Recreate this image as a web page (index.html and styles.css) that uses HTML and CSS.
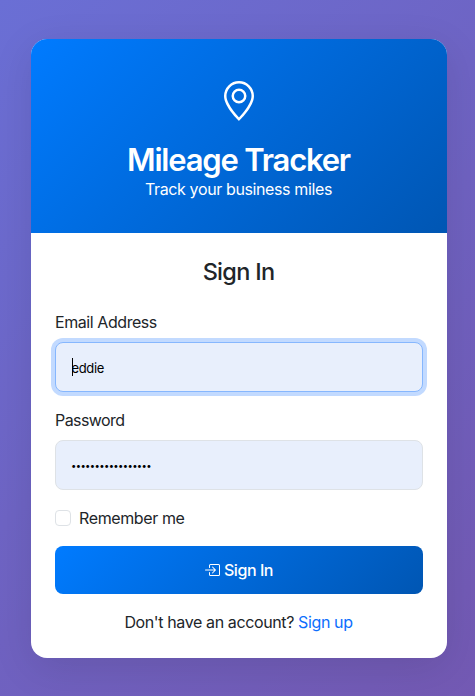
FILE: index.html
```html
<!DOCTYPE html>
<html lang="en">
<head>
<meta charset="utf-8">
<title>Mileage Tracker</title>
<link rel="stylesheet" href="styles.css">
</head>
<body>
<main class="card">
  <header class="card-header">
    <svg class="pin" viewBox="0 0 16 16" fill="currentColor"><path d="M12.166 8.94c-.524 1.062-1.234 2.12-1.96 3.07A32 32 0 0 1 8 14.58a32 32 0 0 1-2.206-2.57c-.726-.95-1.436-2.008-1.96-3.07C3.304 7.867 3 6.862 3 6a5 5 0 0 1 10 0c0 .862-.305 1.867-.834 2.94M8 16s6-5.686 6-10A6 6 0 0 0 2 6c0 4.314 6 10 6 10"/><path d="M8 8a2 2 0 1 1 0-4 2 2 0 0 1 0 4m0 1a3 3 0 1 0 0-6 3 3 0 0 0 0 6"/></svg>
    <h1 class="title"><span>Mileage Tracker</span></h1>
    <p class="subtitle"><span>Track your business miles</span></p>
  </header>
  <form class="card-body">
    <h2 class="heading"><span>Sign In</span></h2>
    <div class="field">
      <label class="label label-email" for="email">Email Address</label>
      <div class="control control-focus"><span class="caret"></span><input class="input" id="email" type="text" value="eddie"></div>
    </div>
    <div class="field">
      <label class="label label-password" for="password">Password</label>
      <div class="control control-dots"><input class="input input-dots" id="password" type="text" value="•••••••••••••••••"></div>
    </div>
    <label class="remember"><input class="checkbox" type="checkbox"><span>Remember me</span></label>
    <button class="submit" type="button"><svg class="enter" viewBox="0 0 16 16" fill="currentColor"><path d="M6 3.5a.5.5 0 0 1 .5-.5h8a.5.5 0 0 1 .5.5v9a.5.5 0 0 1-.5.5h-8a.5.5 0 0 1-.5-.5v-2a.5.5 0 0 0-1 0v2A1.5 1.5 0 0 0 6.5 14h8a1.5 1.5 0 0 0 1.5-1.5v-9A1.5 1.5 0 0 0 14.5 2h-8A1.5 1.5 0 0 0 5 3.5v2a.5.5 0 0 0 1 0z"/><path d="M11.854 8.354a.5.5 0 0 0 0-.708l-3-3a.5.5 0 1 0-.708.708L10.293 7.5H1.5a.5.5 0 0 0 0 1h8.793l-2.147 2.146a.5.5 0 0 0 .708.708z"/></svg><span>Sign In</span></button>
    <p class="signup">Don't have an account? <a href="#">Sign up</a></p>
  </form>
</main>
</body>
</html>
```
FILE: styles.css
```css
* { box-sizing: border-box; }

body {
  margin: 0;
  height: 696px;
  padding: 39px 28px 38px 31px;
  overflow: hidden;
  background: linear-gradient(135deg, #6a6fd5 0%, #6e64c4 45%, #7359b3 100%);
  color: #212529;
  font: 16px/24px Inter, "Liberation Sans", sans-serif;
  letter-spacing: -0.38px;
}

h1, h2, p { margin: 0; }

.card {
  height: 619px;
  border-radius: 16px;
  overflow: hidden;
  background: #fff;
  box-shadow: 0 10px 40px rgba(0, 0, 0, 0.1);
}

.card-header {
  display: flex;
  flex-direction: column;
  align-items: center;
  height: 194px;
  padding: 42px 1px 0 0;
  background: linear-gradient(135deg, #007bff 0%, #0056b3 100%);
  color: #fff;
}

.pin {
  width: 40px;
  height: 40px;
}

.title {
  margin-top: 20px;
  font-size: 31px;
  font-weight: 600;
  line-height: 38px;
  letter-spacing: -1.2px;
}

.subtitle { margin-top: -2px; }

.card-body {
  display: flex;
  flex-direction: column;
  padding: 24px;
}

.heading {
  margin-bottom: 24px;
  padding-right: 1px;
  font-size: 23.5px;
  font-weight: 500;
  line-height: 29px;
  letter-spacing: -0.7px;
  text-align: center;
}

.field { margin-bottom: 16px; }

.label {
  display: block;
  margin-bottom: 8px;
}

.label-email { letter-spacing: -0.43px; }

.label-password { letter-spacing: -0.58px; }

.control {
  display: flex;
  align-items: center;
  position: relative;
  height: 50px;
  padding: 0 16px;
  border: 1px solid #dee2e6;
  border-radius: 8px;
  background: #e8effc;
}

.control-focus {
  padding: 2px 16px 0 15.5px;
  border-color: #86b7fe;
  box-shadow: 0 0 0 4px #c2daff;
}

.control-dots { padding: 2px 16px 0 15px; }

.input {
  width: 100%;
  padding: 0;
  border: 0;
  outline: 0;
  background: none;
  color: #000;
  font: 13px/20px Inter, "Liberation Sans", sans-serif;
  letter-spacing: -0.35px;
}

.input-dots {
  font-size: 9.5px;
  letter-spacing: -0.64px;
}

.caret {
  position: absolute;
  left: 16px;
  top: 15px;
  width: 1px;
  height: 18px;
  background: #000;
}

.remember {
  display: flex;
  align-items: center;
  gap: 8px;
  margin-bottom: 16px;
}

.checkbox {
  appearance: none;
  width: 16px;
  height: 16px;
  margin: 0;
  border: 1px solid #dee2e6;
  border-radius: 4px;
  background: #fff;
}

.submit {
  display: flex;
  justify-content: center;
  align-items: center;
  gap: 4px;
  height: 48px;
  padding: 0 1px 0 0;
  border: 0;
  border-radius: 8px;
  background: linear-gradient(135deg, #007bff 0%, #0056b3 100%);
  color: #fff;
  font: 500 16px/24px Inter, "Liberation Sans", sans-serif;
  letter-spacing: -0.45px;
}

.enter {
  width: 16px;
  height: 16px;
}

.signup {
  margin-top: 16px;
  padding-right: 1px;
  text-align: center;
}

.signup a {
  color: #0d6efd;
  text-decoration: none;
}
```
